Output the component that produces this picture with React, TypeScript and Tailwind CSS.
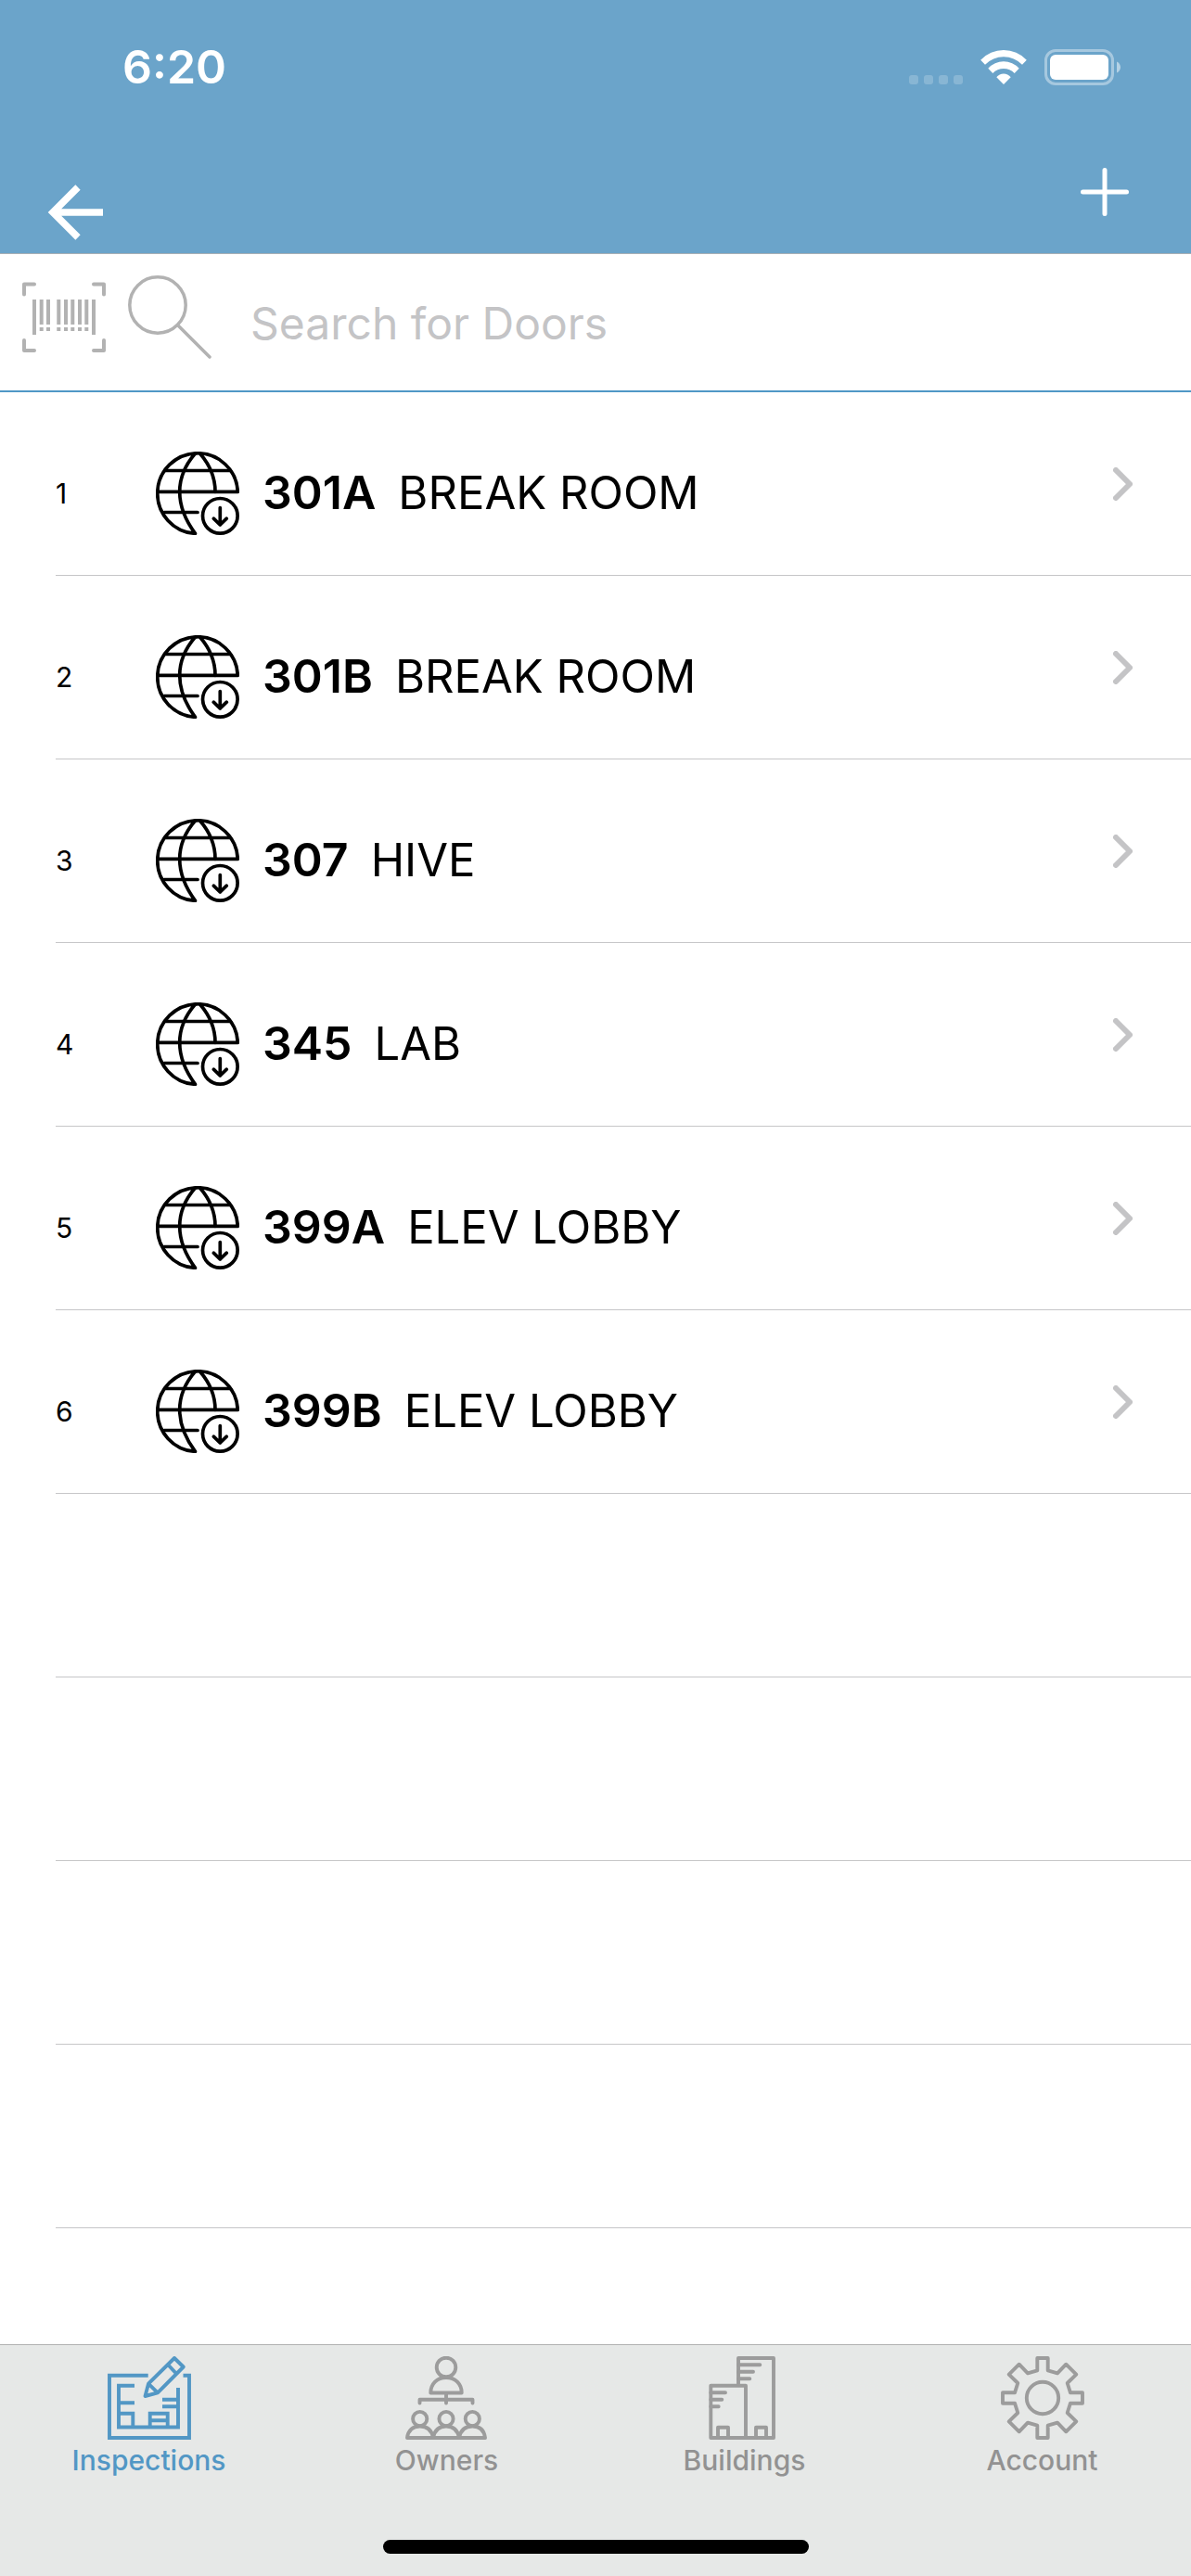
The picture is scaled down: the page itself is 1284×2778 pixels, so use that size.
import type { ReactNode } from "react";

const doors = [
  { id: "301A", name: "BREAK ROOM" },
  { id: "301B", name: "BREAK ROOM" },
  { id: "307", name: "HIVE" },
  { id: "345", name: "LAB" },
  { id: "399A", name: "ELEV LOBBY" },
  { id: "399B", name: "ELEV LOBBY" },
];

const emptyRows = [7, 8, 9, 10];

function StatusBar() {
  return (
    <div className="h-36 pl-[132px] pr-[76px] flex justify-between items-center">
      <span className="text-[50px] leading-[52px] font-semibold">6:20</span>
      <div className="flex items-end">
        <div className="flex gap-1.5 pb-px mr-[19px]">
          <span className="size-2.5 rounded-[3px] bg-white/20" />
          <span className="size-2.5 rounded-[3px] bg-white/20" />
          <span className="size-2.5 rounded-[3px] bg-white/20" />
          <span className="size-2.5 rounded-[3px] bg-white/20" />
        </div>
        <svg className="w-[50px] h-[38px] mr-[19px]" viewBox="0 0 50 38" fill="currentColor">
          <path d="M0.2 10.7A34.1 34.1 0 0 1 49.8 10.7L45 15.7A28 28 0 0 0 5 15.7Z" />
          <path d="M8.3 19.7A22.5 22.5 0 0 1 41.7 19.7L36.7 25A16.2 16.2 0 0 0 13.3 25Z" />
          <path d="M17.3 29.3A9.8 9.8 0 0 1 32.7 29.3L25 37Z" />
        </svg>
        <svg className="w-[82px] h-[39px]" viewBox="0 0 82 39" fill="none">
          <rect x="1.5" y="1.5" width="72" height="36" rx="10.5" stroke="white" strokeOpacity="0.4" strokeWidth="3" />
          <rect x="6" y="6" width="63" height="27" rx="6" fill="white" />
          <path d="M78 13.5C80.5 14.5 82 17 82 19.5S80.5 24.5 78 25.5Z" fill="white" fillOpacity="0.5" />
        </svg>
      </div>
    </div>
  );
}

function Header() {
  return (
    <header className="bg-[#6ba4ca] text-white border-b border-[#a7b0b6]">
      <StatusBar />
      <div className="h-[129px] pl-[51px] pr-[66px] flex justify-between items-center">
        <button aria-label="Back" className="pt-10">
          <svg className="size-[60px]" viewBox="0 0 60 60" fill="none" stroke="currentColor" strokeWidth="7.5">
            <path d="M33 3L6 30L33 57M6 30H60" />
          </svg>
        </button>
        <button aria-label="Add door" className="pb-1">
          <svg className="size-[54px]" viewBox="0 0 54 54" fill="none" stroke="currentColor" strokeWidth="5" strokeLinecap="round">
            <path d="M27 3.5V50.5M3.5 27H50.5" />
          </svg>
        </button>
      </div>
    </header>
  );
}

function SearchBar() {
  return (
    <div className="h-[149px] pl-6 flex items-center border-b-2 border-[#4f98c6]">
      <button aria-label="Scan barcode" className="mb-3 text-[#b2b2b2]">
        <svg className="size-[90px]" viewBox="0 0 90 90" fill="none" stroke="currentColor" strokeWidth="4">
          <path
            strokeLinecap="round"
            strokeLinejoin="round"
            d="M13 9.5H2V20.5M77 9.5H88V20.5M2 70V81H13M88 70V81H77"
          />
          <path d="M13 26V64M77 26V64" />
          <path d="M20.7 26V53M28 26V53M39.3 26V53M47 26V53M54.3 26V53M62 26V53M69.3 26V53" />
          <path d="M20.7 56V60M28 56V60M39.3 56V60M47 56V60M54.3 56V60M62 56V60M69.3 56V60" />
        </svg>
      </button>
      <label htmlFor="door-search" className="mb-3 ml-6 text-[#b2b2b2]" aria-label="Search">
        <svg className="size-[90px]" viewBox="0 0 90 90" fill="none" stroke="currentColor" strokeWidth="3.5" strokeLinecap="round">
          <circle cx="32" cy="32" r="30.2" />
          <path d="M53.5 53.5L88 88" />
        </svg>
      </label>
      <input
        id="door-search"
        type="text"
        placeholder="Search for Doors"
        className="ml-[42px] pt-0.5 flex-1 min-w-0 text-[48px] leading-[60px] outline-none placeholder:text-[#c4c4c6]"
      />
    </div>
  );
}

function GlobeIcon() {
  return (
    <svg
      className="size-[90px] shrink-0"
      viewBox="0 0 90 90"
      fill="none"
      stroke="currentColor"
      strokeWidth="3.7"
      strokeLinecap="round"
      strokeLinejoin="round"
    >
      <path d="M2 43.3H88.3A43.3 43.3 0 1 0 42.5 88.3C31 73 25.7 58 25.7 43.3C25.7 28 32 14 42.5 2" />
      <path d="M47.5 2C58 14 64 28 64 43.3M10 20.5H80.5M9 65.5H45" />
      <circle cx="69.3" cy="69.3" r="18.8" />
      <path d="M69.3 60.5V79M62.3 72.2L69.3 79L76.3 72.2" />
    </svg>
  );
}

function DoorRow({ index, id, name }: { index: number; id: string; name: string }) {
  return (
    <li className="ml-[60px] border-b border-[#c6c6c8]">
      <a href={"#" + id} className="h-[197px] pr-[63px] flex items-center">
        <span className="w-[108px] pt-5 text-[30px] leading-9">{index}</span>
        <span className="pt-5 flex items-center">
          <GlobeIcon />
          <span className="ml-[25px] flex items-baseline gap-6 leading-[60px]">
            <b className="text-[50px] font-semibold">{id}</b>
            <span className="text-[49px]">{name}</span>
          </span>
        </span>
        <svg
          className="ml-auto w-[21px] h-9"
          viewBox="0 0 21 36"
          fill="none"
          stroke="#c4c4c6"
          strokeWidth="6"
          strokeLinecap="round"
          strokeLinejoin="round"
        >
          <path d="M3 3L18 18L3 33" />
        </svg>
      </a>
    </li>
  );
}

function TabItem({ label, active, children }: { label: string; active?: boolean; children: ReactNode }) {
  return (
    <a
      href={"#" + label.toLowerCase()}
      className={
        active
          ? "flex-1 flex flex-col items-center text-[#5297c5]"
          : "flex-1 flex flex-col items-center text-[#9c9c9c]"
      }
    >
      {children}
      <span className={active ? "mt-0.5 text-[30px] leading-10 font-medium" : "mt-0.5 text-[30px] leading-10 font-medium text-[#929292]"}>
        {label}
      </span>
    </a>
  );
}

function TabBar() {
  return (
    <nav className="h-[250px] pt-3 flex flex-col border-t border-[#b2b2b2] bg-[#e6e8e7]">
      <div className="flex">
        <TabItem label="Inspections" active>
          <svg className="size-[90px]" viewBox="1 0 90 90" fill="none" stroke="currentColor" strokeWidth="3.9">
            <path d="M44.7 20.7H3V88H89V20.7H82.5" />
            <path d="M30 31.7H13V76.5H77V34M13 50.3H30M60 46.7H77M60 54.3H77" />
            <path d="M13 61.7H28.3V76.5M46.7 76.5V61.7H65.7V76.5M46.7 69.3H65.7" />
            <path strokeLinejoin="round" d="M41.5 43L45 29.7L73 2L82.7 11.5L55 39.3ZM66 9L75.3 19M45 29.7L55 39.3" />
          </svg>
        </TabItem>
        <TabItem label="Owners">
          <svg className="size-[90px]" viewBox="1 0 90 90" fill="none" stroke="currentColor" strokeWidth="3.9" strokeLinecap="round" strokeLinejoin="round">
            <circle cx="45" cy="12" r="10.3" />
            <path d="M28.3 39.5C28.3 30 35 23 45 23S61.7 30 61.7 39.5Z" />
            <path d="M45 40V50.5M16.5 50.5V46.7H73.5V50.5" />
            <circle cx="16.7" cy="67.5" r="7.6" />
            <circle cx="45" cy="67.5" r="7.6" />
            <circle cx="73.3" cy="67.5" r="7.6" />
            <path d="M3 88C4 80 9 75.5 16.7 75.5S29.5 80 31 88Z" />
            <path d="M31 88C32.5 80 37.5 75.5 45 75.5S57.5 80 59 88Z" />
            <path d="M59 88C60.5 80 65.5 75.5 73.3 75.5S86 80 87 88Z" />
          </svg>
        </TabItem>
        <TabItem label="Buildings">
          <svg className="size-[90px]" viewBox="3 0 90 90" fill="none" stroke="currentColor" strokeWidth="3.9" strokeLinecap="round" strokeLinejoin="round">
            <path d="M41 31.7V2H79V88H11.3V31.7H49V88" />
            <path d="M41 9.3H64.3M41 16.8H57M41 24.3H53.3" />
            <path d="M11.3 39.3H27M11.3 46.8H23.3M11.3 54.3H19.7" />
            <path d="M19 88V76.7H30V88M60 88V76.7H71V88" />
          </svg>
        </TabItem>
        <TabItem label="Account">
          <svg className="size-[90px]" viewBox="0 0 90 90" fill="none" stroke="currentColor" strokeWidth="3.9" strokeLinejoin="round">
            <path d="M39.3 2H50.7V15.3L61 18.3L70.3 8.7L81.3 19.7L71.7 29L75 39.3H88V50.7H75L71.7 61L81.3 70.3L70.3 81.3L61 71.7L50.7 74.7V88H39.3V74.7L29 71.7L19.7 81.3L8.7 70.3L18.3 61L15 50.7H2V39.3H15L18.3 29L8.7 19.7L19.7 8.7L29 18.3L39.3 15.3Z" />
            <circle cx="45" cy="45" r="17.2" />
          </svg>
        </TabItem>
      </div>
      <div className="mt-auto mb-6 mx-auto w-[459px] h-[15px] rounded-full bg-black" />
    </nav>
  );
}

function App() {
  return (
    <div className="min-h-screen flex flex-col bg-white text-black" style={{ fontFamily: "Inter, sans-serif" }}>
      <Header />
      <SearchBar />
      <ul className="flex-1">
        {doors.map((door, i) => (
          <DoorRow key={door.id} index={i + 1} id={door.id} name={door.name} />
        ))}
        {emptyRows.map((row) => (
          <li key={row} className="ml-[60px] h-[198px] border-b border-[#c6c6c8]" />
        ))}
      </ul>
      <TabBar />
    </div>
  );
}

export default App;
